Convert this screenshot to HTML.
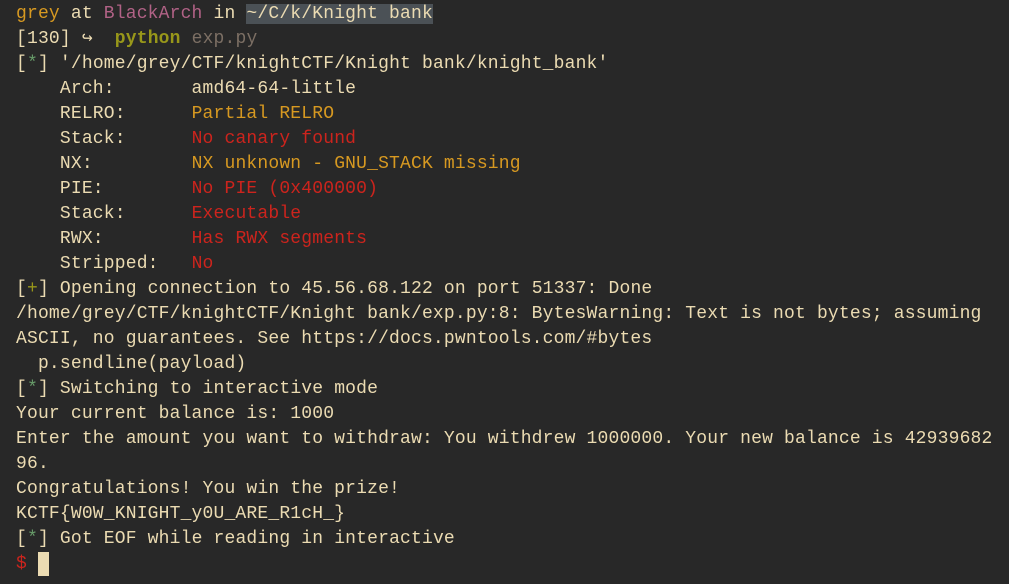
<!DOCTYPE html>
<html><head><meta charset="utf-8"><style>
html,body{margin:0;padding:0;background:#282828;width:1009px;height:584px;overflow:hidden}
pre{margin:0;padding:2px 0 0 16px;font-family:"Liberation Mono","DejaVu Sans Mono",monospace;font-size:18px;letter-spacing:0.17px;line-height:25px;color:#ebdbb2;white-space:pre}
.y{color:#d79921}.p{color:#b16286}.hl{background:#4b5156}.g{color:#98971a;font-weight:bold}.d{color:#7c6f64}
.r{color:#cc241d}.a{color:#689d6a}.gr{color:#98971a}
.cur{display:inline-block;width:11px;height:24px;background:#ebdbb2;vertical-align:top}
</style></head><body><pre><span class="y">grey</span> at <span class="p">BlackArch</span> in <span class="hl">~/C/k/Knight bank</span>
[130] ↪  <span class="g">python</span> <span class="d">exp.py</span>
[<span class="a">*</span>] '/home/grey/CTF/knightCTF/Knight bank/knight_bank'
    Arch:       amd64-64-little
    RELRO:      <span class="y">Partial RELRO</span>
    Stack:      <span class="r">No canary found</span>
    NX:         <span class="y">NX unknown - GNU_STACK missing</span>
    PIE:        <span class="r">No PIE (0x400000)</span>
    Stack:      <span class="r">Executable</span>
    RWX:        <span class="r">Has RWX segments</span>
    Stripped:   <span class="r">No</span>
[<span class="gr">+</span>] Opening connection to 45.56.68.122 on port 51337: Done
/home/grey/CTF/knightCTF/Knight bank/exp.py:8: BytesWarning: Text is not bytes; assuming
ASCII, no guarantees. See https://docs.pwntools.com/#bytes
  p.sendline(payload)
[<span class="a">*</span>] Switching to interactive mode
Your current balance is: 1000
Enter the amount you want to withdraw: You withdrew 1000000. Your new balance is 42939682
96.
Congratulations! You win the prize!
KCTF{W0W_KNIGHT_y0U_ARE_R1cH_}
[<span class="a">*</span>] Got EOF while reading in interactive
<span class="r">$</span> <span class="cur"></span></pre></body></html>
